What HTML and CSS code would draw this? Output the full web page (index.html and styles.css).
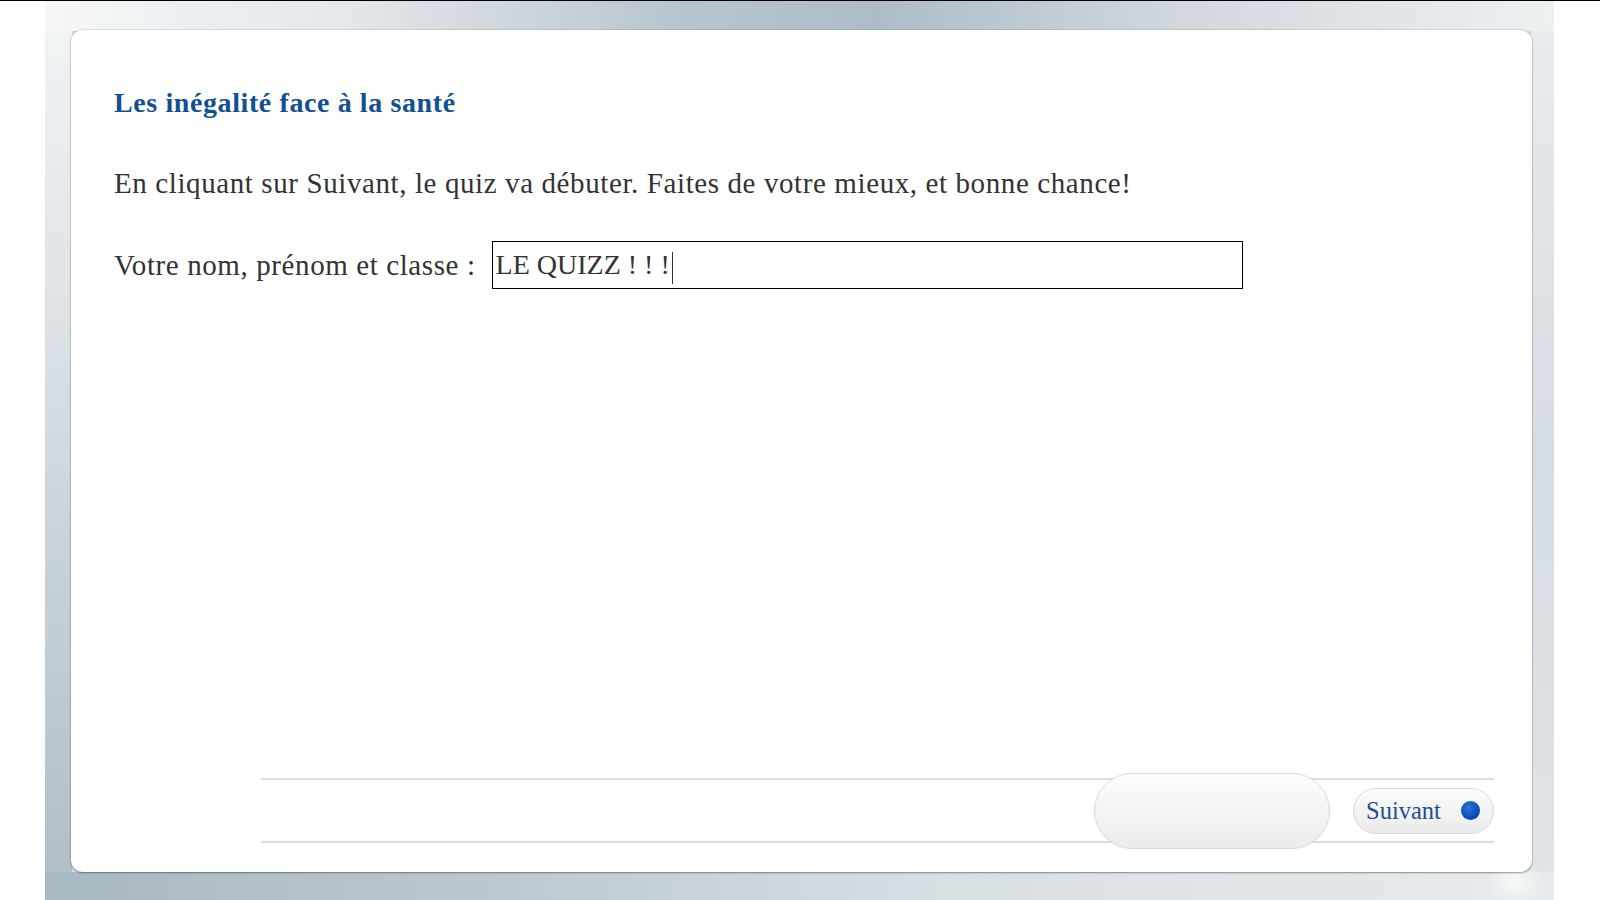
FILE: index.html
```html
<!DOCTYPE html>
<html lang="fr">
<head>
    <meta charset="UTF-8">
    <title>Les inégalité face à la santé</title>
    <link rel="stylesheet" href="styles.css">
</head>
<body>
    <div class="stage">
        <div class="slide">
            <div class="content">
                <h1 class="title">Les inégalité face à la santé</h1>
                <p class="intro">En cliquant sur Suivant, le quiz va débuter. Faites de votre mieux, et bonne chance!</p>
                <div class="name-row">
                    <label class="name-label">Votre nom, prénom et classe :</label>
                    <div class="name-field">LE QUIZZ ! ! !<span class="caret"></span></div>
                </div>
            </div>
            <div class="nav">
                <div class="nav-blank"></div>
                <button class="nav-next">Suivant <span class="dot"></span></button>
            </div>
        </div>
    </div>
</body>
</html>
```

FILE: styles.css
```css
body {
    margin: 0;
    border-top: 1px solid #000;
    background: #fff;
    font-family: "Liberation Serif", "DejaVu Serif", serif;
}

.stage {
    width: 1509px;
    height: 899px;
    margin-left: 45px;
    box-sizing: border-box;
    padding: 29px 22px 28px 26px;
    background-color: #d3dbe0;
    background-image:
        radial-gradient(ellipse 30px 26px at 1470px 880px, rgba(255, 255, 255, 0.7), rgba(255, 255, 255, 0) 100%),
        linear-gradient(to right, #f5f7f8 0%, #e3e8eb 20%, #b8c5ce 42%, #adbcc7 55%, #d0d8de 75%, #eef1f2 100%),
        linear-gradient(to right, #a8b8c3 0%, #bcc8d0 30%, #d9e0e4 60%, #e7ebed 100%),
        linear-gradient(to bottom, #f3f5f6 0%, #dde3e7 35%, #c9d3d9 60%, #aebdc7 100%),
        linear-gradient(to bottom, #e9edef 0%, #d6dde2 50%, #dfe5e8 100%);
    background-size: 100% 100%, 100% 30px, 100% 28px, 27px 100%, 23px 100%;
    background-position: top left, top left, bottom left, top left, top right;
    background-repeat: no-repeat;
}

.slide {
    height: 100%;
    box-sizing: border-box;
    background: #fff;
    border-radius: 12px;
    box-shadow: 0 1px 2px rgba(0, 0, 0, 0.35), 0 0 0 1px rgba(0, 0, 0, 0.07);
    padding: 0 38px 29px 43px;
    display: flex;
    flex-direction: column;
}

.content {
    flex: 1;
}

.title {
    margin: 58px 0 0;
    font-size: 28px;
    font-weight: bold;
    letter-spacing: 0.6px;
    color: #124f93;
    line-height: 30px;
}

.intro {
    margin: 50px 0 0;
    font-size: 29px;
    letter-spacing: 0.6px;
    color: #333;
    line-height: 30px;
}

.name-row {
    display: flex;
    align-items: center;
    margin-top: 43px;
}

.name-label {
    font-size: 29px;
    letter-spacing: 0.6px;
    color: #333;
    margin-right: 16px;
}

.name-field {
    width: 746px;
    height: 46px;
    border: 1px solid #000;
    font-size: 28px;
    color: #333;
    line-height: 46px;
    padding-left: 3px;
    box-sizing: content-box;
}

.caret {
    display: inline-block;
    width: 1px;
    height: 32px;
    background: #333;
    vertical-align: middle;
    margin-left: 2px;
}

.nav {
    margin-left: 147px;
    height: 61px;
    border-top: 2px solid #ddd;
    border-bottom: 2px solid #ddd;
    display: flex;
    justify-content: flex-end;
    align-items: center;
    gap: 23px;
}

.nav-blank {
    width: 234px;
    height: 74px;
    border: 1px solid #d9d9d9;
    border-radius: 38px;
    background: linear-gradient(to bottom, #fdfdfd, #ececec);
}

.nav-next {
    width: 141px;
    height: 46px;
    border: 1px solid #d9d9d9;
    border-radius: 23px;
    background: linear-gradient(to bottom, #fbfbfb, #ebebeb);
    font-family: "Liberation Serif", "DejaVu Serif", serif;
    font-size: 24.5px;
    color: #1a4f92;
    display: flex;
    align-items: center;
    justify-content: space-between;
    padding: 0 13px 0 12px;
    box-sizing: border-box;
}

.dot {
    width: 19px;
    height: 19px;
    border-radius: 50%;
    background: radial-gradient(circle at 40% 35%, #2f73d8, #0048b6 70%);
}
```
